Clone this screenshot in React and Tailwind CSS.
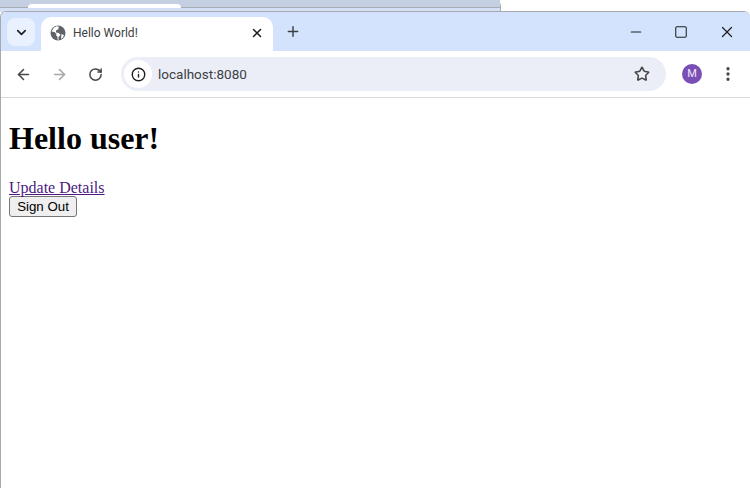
import { ArrowLeft, ArrowRight, RotateCw, Info, Star, Plus, X, Minus, Square, ChevronDown, EllipsisVertical } from 'lucide-react'

function GlobeIcon() {
  return (
    <svg width="16" height="16" viewBox="0 0 16 16">
      <circle cx="8" cy="8" r="7.5" fill="#5f6368" />
      <path d="M1.5 6.5l3 .5 2 2-.5 1.5 1.5 1v3l1 .5V12l2-2-1.5-2-3-.5L6 5.500l2-1 1-2.500L7 1 4 2.500zM11.500 9l2.500 1-1 2.500-2 1.500z" fill="#fff" />
    </svg>
  )
}

export default function App() {
  return (
    <div className="w-[750px] h-[488px] overflow-hidden bg-white relative" style={{ fontFamily: '"Liberation Serif", serif' }}>
      {/* windows stacked behind */}
      <div className="absolute left-0 top-0 w-[501px] h-[12px] bg-[#d3e0f5] border-r border-[#a9adb4] rounded-tr-md">
        <div className="h-[8px] bg-[#c5cfe2] border-b border-[#a9adb4]">
          <div className="ml-[28px] pt-[4px] w-[153px] h-[8px]">
            <div className="h-[4px] bg-white rounded-t-sm" />
          </div>
        </div>
      </div>

      <div className="absolute left-0 top-[11px] w-[750px] h-[477px] flex flex-col bg-white border-l border-t border-[#a8a9ad] rounded-tl-md rounded-tr-md overflow-hidden">
        {/* tab strip */}
        <div className="h-[39px] bg-[#d3e3fd] flex items-end pl-[6px] shrink-0">
          <div className="w-[28px] h-[28px] mb-[5px] rounded-lg bg-[#e9f0fe] flex items-center justify-center">
            <ChevronDown size={15} strokeWidth={2.6} color="#1f1f1f" />
          </div>
          <div className="ml-[6px] w-[232px] h-[34px] bg-white rounded-t-[10px] flex items-center pl-[9px] pr-[9px] pb-[2px]">
            <GlobeIcon />
            <span className="ml-[7px] -mt-px flex-1 text-[12px] text-[#3c4043]" style={{ fontFamily: 'Roboto, sans-serif' }}>Hello World!</span>
            <X size={14} strokeWidth={2.6} color="#1f1f1f" />
          </div>
          <div className="ml-[12px] mb-[6px] w-[16px] h-[28px] flex items-center justify-center">
            <Plus size={17} strokeWidth={2.2} color="#3c4043" />
          </div>
          <div className="flex-1" />
          <div className="flex items-center h-[38px] pr-[14px] gap-[30px]">
            <Minus size={16} strokeWidth={1.8} color="#1f1f1f" />
            <Square size={14} strokeWidth={1.8} color="#1f1f1f" />
            <X size={18} strokeWidth={1.6} color="#1f1f1f" />
          </div>
        </div>

        {/* toolbar */}
        <div className="h-[47px] bg-white border-b border-[#d9d9d9] flex items-center shrink-0 rounded-tl-lg" style={{ fontFamily: 'Roboto, sans-serif' }}>
          <ArrowLeft size={17} strokeWidth={2.2} color="#474747" className="ml-[14px]" />
          <ArrowRight size={17} strokeWidth={2.2} color="#a5a7aa" className="ml-[19px]" />
          <RotateCw size={15} strokeWidth={2.4} color="#474747" className="ml-[20px]" />
          <div className="ml-[18px] w-[545px] h-[34px] bg-[#ebeef7] rounded-full flex items-center pl-[3px] pr-[16px]">
            <div className="w-[28px] h-[28px] rounded-full bg-white flex items-center justify-center">
              <Info size={15} strokeWidth={2.2} color="#1f1f1f" />
            </div>
            <span className="ml-[6px] flex-1 text-[13.5px] text-[#3c4043]">localhost:8080</span>
            <Star size={16} strokeWidth={2.4} color="#474747" className="-mt-px" />
          </div>
          <div className="ml-[16px] w-[20px] h-[20px] rounded-full bg-[#7a4fb5] text-[#f1e6fb] text-[11px] flex items-center justify-center">M</div>
          <EllipsisVertical size={18} strokeWidth={2.4} color="#474747" className="ml-[17px]" />
        </div>

        {/* page */}
        <div className="pl-[8px] text-black">
          <h1 className="text-[32px] font-bold leading-[37px] mt-[22px] mb-[22px]">Hello user!</h1>
          <a href="#" className="block text-[16px] leading-[18px] text-[#4c1a80] underline">Update Details</a>
          <button className="block -mt-px h-[21px] w-[68px] bg-[#efefef] border border-[#767676] rounded-[3px] text-[13.3px] leading-none text-black" style={{ fontFamily: '"Liberation Sans", sans-serif' }}>Sign Out</button>
        </div>
      </div>
    </div>
  )
}
